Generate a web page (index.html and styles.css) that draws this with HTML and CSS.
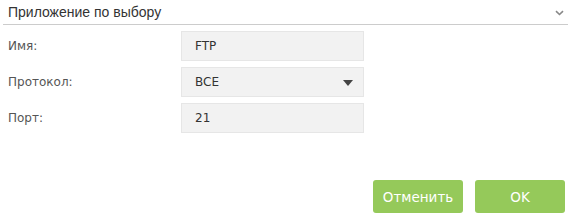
FILE: index.html
```html
<!DOCTYPE html>
<html lang="ru">
<head>
  <meta charset="UTF-8">
  <title>Приложение по выбору</title>
  <link rel="stylesheet" href="styles.css">
</head>
<body>
  <div class="panel">
    <div class="panel-head">
      <span>Приложение по выбору</span>
      <svg class="chevron" width="9" height="6" viewBox="0 0 9 6"><path d="M1 1.2 L4.5 4.5 L8 1.2" fill="none" stroke="#888" stroke-width="1.6"/></svg>
    </div>
    <div class="form">
      <div class="row">
        <label>Имя:</label>
        <div class="field">FTP</div>
      </div>
      <div class="row">
        <label>Протокол:</label>
        <div class="field select">BCE<span class="caret"></span></div>
      </div>
      <div class="row">
        <label>Порт:</label>
        <div class="field">21</div>
      </div>
    </div>
    <div class="actions">
      <button type="button">Отменить</button>
      <button type="button">OK</button>
    </div>
  </div>
</body>
</html>
```

FILE: styles.css
```css
body { margin: 0; background: #fff; font-family: "DejaVu Sans", Verdana, sans-serif; }
.panel { width: 565px; margin-left: 3px; }
.panel-head {
  display: flex;
  align-items: center;
  justify-content: space-between;
  height: 24px;
  padding: 0 4px 0 5px;
  border-bottom: 1px solid #ccc;
  font-family: "Liberation Sans", Arial, sans-serif;
  font-size: 14px;
  color: #333;
}
.chevron { margin-top: 2px; }
.form { padding-top: 6px; display: flex; flex-direction: column; gap: 6px; }
.row { display: flex; align-items: center; }
.row label { width: 173px; padding-left: 5px; font-size: 12px; color: #555; }
.field {
  width: 168px;
  height: 28px;
  line-height: 28px;
  padding-left: 13px;
  background: #f2f2f2;
  border: 1px solid #e6e6e6;
  font-size: 12px;
  color: #333;
}
.select { position: relative; }
.caret {
  position: absolute;
  right: 10px;
  top: 12px;
  border-left: 5px solid transparent;
  border-right: 5px solid transparent;
  border-top: 6px solid #444;
}
.actions { display: flex; justify-content: flex-end; gap: 12px; margin-top: 47px; padding-right: 3px; }
button {
  width: 90px;
  height: 33px;
  background: #95c95a;
  color: #fff;
  border: none;
  border-radius: 3px;
  font-family: "DejaVu Sans", Verdana, sans-serif;
  font-size: 13.5px;
}
```
